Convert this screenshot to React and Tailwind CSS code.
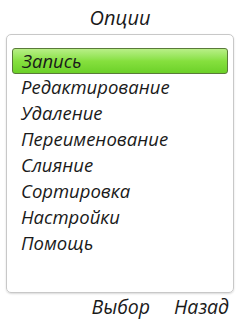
const items = [
  'Запись',
  'Редактирование',
  'Удаление',
  'Переименование',
  'Слияние',
  'Сортировка',
  'Настройки',
  'Помощь',
];

export default function App() {
  return (
    <div
      className="w-[240px] h-[320px] bg-white flex flex-col italic text-[#1a1a1a] overflow-hidden"
      style={{ fontFamily: '"Open Sans", "DejaVu Sans", sans-serif' }}
    >
      <div className="h-[34px] flex items-center justify-center text-[20px] leading-none pt-[1px]">Опции</div>

      <div className="mx-[6px] h-[259px] border border-[#c8c8c8] rounded-[5px] shadow-[0_1px_2px_rgba(0,0,0,0.15)] pt-[13px] px-[5px]">
        {items.map((item, i) => (
          <div
            key={item}
            className={`h-[26px] flex items-center pl-[9px] text-[18.5px] leading-none ${
              i === 0
                ? 'rounded-[3px] border border-[#5a7a3a] bg-gradient-to-b from-[#b8ef86] via-[#86e03e] to-[#6cd128]'
                : ''
            }`}
          >
            {item}
          </div>
        ))}
      </div>

      <div className="flex-1 flex items-center justify-end gap-[24px] pr-[11px] text-[19.5px] leading-none">
        <span>Выбор</span>
        <span>Назад</span>
      </div>
    </div>
  );
}
